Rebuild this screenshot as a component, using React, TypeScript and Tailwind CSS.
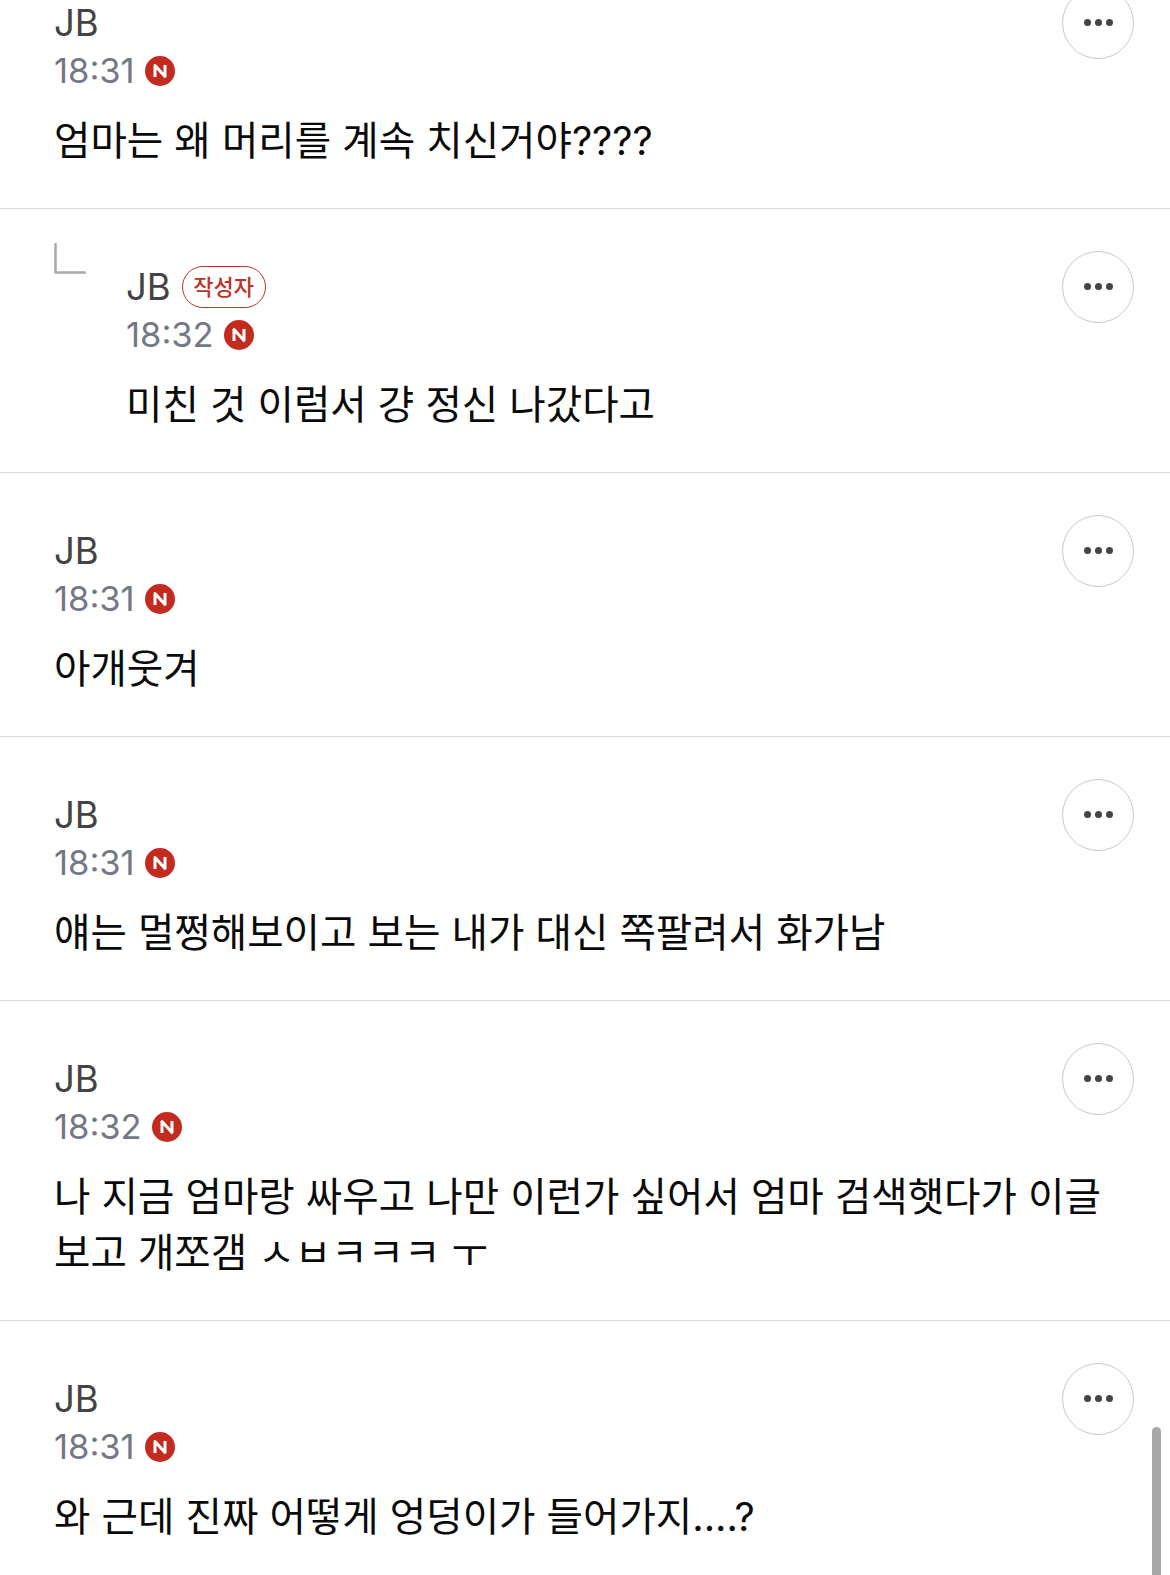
const font = `font-['Inter','Noto_Sans_CJK_KR',sans-serif]`;

type Comment = {
  id: number;
  time: string;
  text: string;
  reply?: boolean;
  author?: boolean;
};

const comments: Comment[] = [
  { id: 1, time: "18:31", text: "엄마는 왜 머리를 계속 치신거야????" },
  { id: 2, time: "18:32", text: "미친 것 이럼서 걍 정신 나갔다고", reply: true, author: true },
  { id: 3, time: "18:31", text: "아개웃겨" },
  { id: 4, time: "18:31", text: "얘는 멀쩡해보이고 보는 내가 대신 쪽팔려서 화가남" },
  { id: 5, time: "18:32", text: "나 지금 엄마랑 싸우고 나만 이런가 싶어서 엄마 검색햇다가 이글 보고 개쪼갬 ㅅㅂㅋㅋㅋ ㅜ" },
  { id: 6, time: "18:31", text: "와 근데 진짜 어떻게 엉덩이가 들어가지....?" },
];

function NewBadge() {
  return (
    <svg width="30" height="30" viewBox="0 0 30 30" className="shrink-0">
      <circle cx="15" cy="15" r="15" fill="#c42b1f" />
      <path d="M10 21V9.5L20 20.5V9" fill="none" stroke="#fff" strokeWidth="3" strokeLinejoin="round" />
    </svg>
  );
}

function ReplyMark() {
  return (
    <svg width="32" height="32" viewBox="0 0 32 32" className="-mt-[8px] shrink-0">
      <path d="M1.5 1V29.5H31" fill="none" stroke="#a9a9a9" strokeWidth="2.5" strokeLinecap="round" strokeLinejoin="round" />
    </svg>
  );
}

function MoreButton() {
  return (
    <button
      type="button"
      className="absolute top-[42px] right-[36px] flex h-[72px] w-[72px] items-center justify-center gap-[4px] rounded-full border-[1.5px] border-[#c9c9c9] bg-white pb-[1px]"
    >
      <span className="h-[7px] w-[7px] rounded-full bg-[#444]" />
      <span className="h-[7px] w-[7px] rounded-full bg-[#444]" />
      <span className="h-[7px] w-[7px] rounded-full bg-[#444]" />
    </button>
  );
}

function CommentRow({ comment }: { comment: Comment }) {
  return (
    <article className="relative flex items-start border-b border-[#d9d9d9] pt-[42px] pr-[36px] pb-[39px] pl-[54px]">
      {comment.reply ? (
        <div className="w-[72px] shrink-0">
          <ReplyMark />
        </div>
      ) : null}
      <div className="min-w-0 flex-1 pt-[15px]">
        <div className="flex h-[42px] items-center gap-[11px]">
          <span className="text-[36.5px] leading-[42px] text-[#444]">JB</span>
          {comment.author ? (
            <span className="flex h-[42px] w-[84px] items-center justify-center rounded-full border-[1.5px] border-[#bd3328] text-[22px] leading-none font-medium text-[#bd3328]">
              작성자
            </span>
          ) : null}
        </div>
        <div className="mt-[9px] flex h-[36px] items-center gap-[10px]">
          <span className="text-[34.5px] leading-[36px] text-[#737886]">{comment.time}</span>
          <NewBadge />
        </div>
        <p className="mt-[24px] text-[39.6px] leading-[56px] text-[#0a0a0a]">{comment.text}</p>
      </div>
      <MoreButton />
    </article>
  );
}

export default function App() {
  return (
    <main className={`relative h-[1575px] w-[1170px] overflow-hidden bg-white ${font}`}>
      <section className="-mt-[55px]">
        {comments.map((comment) => (
          <CommentRow key={comment.id} comment={comment} />
        ))}
      </section>
      <div className="absolute top-[1427px] right-[9px] h-[160px] w-[9px] rounded-full bg-[#a8a8a8]" />
    </main>
  );
}
